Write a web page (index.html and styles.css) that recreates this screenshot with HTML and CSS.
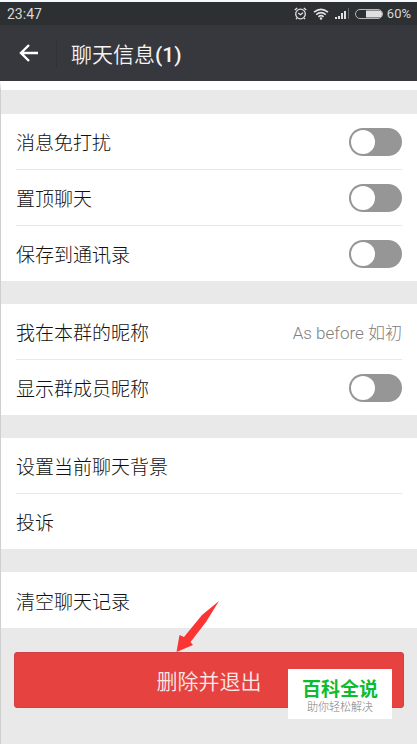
FILE: index.html
```html
<!DOCTYPE html>
<html lang="zh-CN">
<head>
<meta charset="utf-8">
<meta name="viewport" content="width=device-width, initial-scale=1">
<title>聊天信息</title>
<link rel="stylesheet" href="styles.css">
</head>
<body>
<div class="status">
  <time>23:47</time>
  <div class="indicators">
    <svg class="alarm" width="13" height="13" viewBox="0 0 13 13" aria-hidden="true"><circle cx="6.5" cy="7" r="4.8"/><path d="M.8 3 3.2.9M12.2 3 9.8.9M4.2 6l2.3 1.7L9 5.7M3 11l-1 1.2M10 11l1 1.2"/></svg>
    <svg class="wifi" width="16" height="12" viewBox="0 0 16 12" aria-hidden="true"><path d="M1 4.2Q8-1.6 15 4.2M3.2 6.6q4.8-4 9.6 0M5.4 8.8q2.6-2.2 5.2 0"/><circle cx="8" cy="10.5" r="1.2"/></svg>
    <svg class="signal" width="14" height="11" viewBox="0 0 14 11" aria-hidden="true"><path d="M0 9h2v2H0zM3 8h2v3H3zM6 5h2v6H6zM9 3h2v8H9z"/><path class="dim" d="M13 0h1v11h-1z"/></svg>
    <svg class="battery" width="28" height="10" viewBox="0 0 28 10" aria-hidden="true"><rect class="shell" x=".5" y=".5" width="27" height="9" rx="4.5"/><path class="charge" d="M11 1.5h12.5a3.5 3.5 0 0 1 0 7H11z"/></svg>
    <span>60%</span>
  </div>
</div>
<header class="bar">
  <button class="back" type="button" aria-label="返回">
    <svg width="20" height="18" viewBox="0 0 20 18" aria-hidden="true"><path d="M19 9H2M10 1 2 9l8 8"/></svg>
  </button>
  <h1>聊天信息<b>(1)</b></h1>
</header>
<main>
  <section class="group">
    <label class="row"><span>消息免打扰</span><input class="switch" type="checkbox" role="switch"></label>
    <label class="row"><span>置顶聊天</span><input class="switch" type="checkbox" role="switch"></label>
    <label class="row"><span>保存到通讯录</span><input class="switch" type="checkbox" role="switch"></label>
  </section>
  <section class="group">
    <button class="row" type="button"><span>我在本群的昵称</span><span class="value">As before 如初</span></button>
    <label class="row"><span>显示群成员昵称</span><input class="switch" type="checkbox" role="switch"></label>
  </section>
  <section class="group">
    <button class="row" type="button">设置当前聊天背景</button>
    <button class="row" type="button">投诉</button>
  </section>
  <section class="group">
    <button class="row" type="button">清空聊天记录</button>
  </section>
  <div class="action">
    <button class="leave" type="button">删除并退出</button>
    <svg class="pointer" width="46" height="54" viewBox="0 0 46 54" aria-hidden="true"><path d="M44 1 27 15 9 37 4.500 35 1.500 52 18 45 15.500 42 31 22Z"/></svg>
    <div class="stamp"><strong>百科全说</strong><small>助你轻松解决</small></div>
  </div>
</main>
</body>
</html>
```
FILE: styles.css
```css
* { box-sizing: border-box; }

body {
  margin: 0;
  min-height: 100vh;
  border-top: 2px solid #f4f8fc;
  background: #e9e9e9;
  color: #202020;
  font-family: Roboto, "Noto Sans CJK SC", sans-serif;
  font-size: 19px;
  font-weight: 300;
}

button {
  border: 0;
  padding: 0;
  background: none;
  color: inherit;
  font: inherit;
}

svg { display: block; }

.status {
  display: flex;
  align-items: center;
  justify-content: space-between;
  height: 23px;
  padding: 0 6px 0 7px;
  background: #2d3033;
  color: #d8d8d8;
  font-size: 13px;
  font-weight: 400;
}

.status time { font-size: 14px; }

.indicators {
  display: flex;
  align-items: center;
  gap: 6px;
}

.indicators span { margin-left: -2px; }

.alarm, .wifi {
  fill: none;
  stroke: #e0e0e0;
  stroke-width: 1.3;
}

.wifi { stroke-width: 1.6; }
.wifi circle { fill: #e0e0e0; stroke: none; }
.signal { fill: #e0e0e0; }
.signal .dim { fill: #66696c; }
.shell { fill: none; stroke: #b8b8b8; }
.charge { fill: #e0e0e0; }

.bar {
  display: flex;
  align-items: center;
  height: 56px;
  background: #37383d;
  color: #f4f4f4;
}

.back {
  display: flex;
  align-items: center;
  width: 57px;
  height: 28px;
  padding-left: 19px;
  border-right: 1px solid #303136;
}

.back path {
  fill: none;
  stroke: #fff;
  stroke-width: 2.4;
}

h1 {
  margin: 0 0 0 14px;
  font-size: 21px;
  font-weight: 350;
}

h1 b { font-weight: 500; }

main {
  border-top: 9px solid #fff;
  border-left: 1px solid #cfcfcf;
  min-height: calc(100vh - 81px);
  padding-top: 24px;
}

.group {
  margin-bottom: 23px;
  padding: 0 15px;
  background: #fff;
}

.row {
  display: flex;
  align-items: center;
  justify-content: space-between;
  width: 100%;
  height: 55px;
  color: #101010;
  text-align: left;
}

.row + .row {
  height: 56px;
  border-top: 1px solid #e8e8e8;
}

.row:only-child { height: 56px; }

.value {
  color: #808080;
  font-size: 17px;
}

.switch {
  appearance: none;
  width: 53px;
  height: 28px;
  margin: 0;
  padding: 2px;
  border-radius: 14px;
  background: #969696;
}

.switch::before {
  content: "";
  display: block;
  width: 24px;
  height: 24px;
  border-radius: 50%;
  background: #fff;
}

.switch:checked { background: #44b549; }
.switch:checked::before { margin-left: auto; }

.action {
  position: relative;
  margin: 24px 13px 0;
}

.leave {
  width: 100%;
  height: 56px;
  border: 1px solid #cf4144;
  border-radius: 3px;
  background: #e64340;
  color: #fbe9e8;
  font-size: 21px;
  font-weight: 350;
}

.pointer {
  position: absolute;
  top: -52px;
  left: 161px;
  fill: #fb3434;
}

.stamp {
  position: absolute;
  top: 17px;
  right: 12px;
  display: flex;
  flex-direction: column;
  align-items: center;
  width: 104px;
  height: 50px;
  padding-top: 9px;
  background: #fff;
}

.stamp strong {
  color: #0dbb2f;
  font-size: 19px;
  font-weight: 700;
  line-height: 23px;
}

.stamp small {
  color: #808080;
  font-size: 11px;
  line-height: 13px;
}
```
